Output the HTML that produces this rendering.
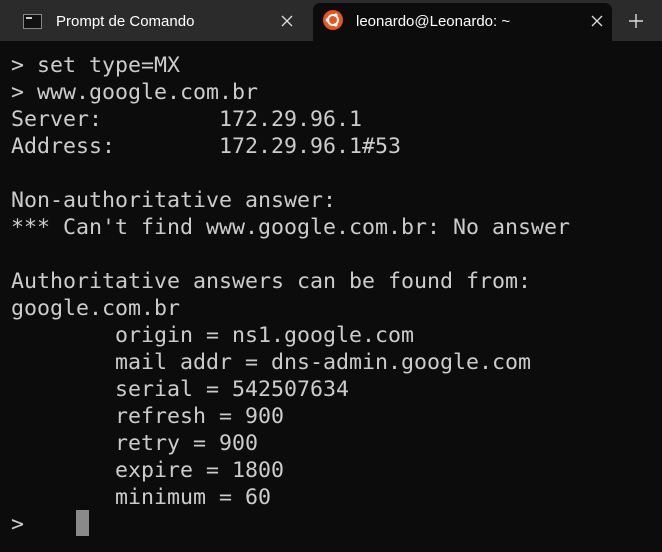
<!DOCTYPE html>
<html><head><style>
body{margin:0;width:662px;height:552px;background:#0c0c0c;overflow:hidden;position:relative;font-family:"Liberation Sans",sans-serif}
.bar{position:absolute;left:0;top:0;width:662px;height:41px;background:#2b2b2b}
.tab{position:absolute;top:0;height:41px;color:#fff;font-size:15px;white-space:nowrap}
.t1{left:0;width:312px}
.t2{left:313px;width:299px;top:3px;height:38px;background:#0c0c0c;border-radius:7px 7px 0 0}
.lbl{position:absolute;top:13px}
.x{position:absolute}
pre{position:absolute;left:11px;top:52px;margin:0;font-family:"DejaVu Sans Mono","Liberation Mono",monospace;font-size:21.6px;line-height:27px;color:#cccccc}
.cur{position:absolute;left:76px;top:510px;width:13px;height:26px;background:#8a8a8a}
</style></head><body>
<div class="bar">
 <div class="tab t1">
  <div style="position:absolute;left:23px;top:14px;width:17px;height:13px;background:#111;border:1px solid #888"><div style="position:absolute;left:2px;top:2px;width:6px;height:2px;background:#ccc"></div></div>
  <span class="lbl" style="left:56px">Prompt de Comando</span>
  <svg class="x" style="left:281px;top:15px" width="12" height="12"><path d="M1 1L11 11M11 1L1 11" stroke="#ddd" stroke-width="1.3"/></svg>
 </div>
 <div class="tab t2">
  <svg style="position:absolute;left:10px;top:7px" width="20" height="20" viewBox="0 0 20 20"><circle cx="10" cy="10" r="10" fill="#e95420"/><circle cx="10" cy="10" r="5" fill="none" stroke="#fff" stroke-width="2"/><circle cx="4.5" cy="10" r="1.8" fill="#fff"/><circle cx="12.8" cy="5.2" r="1.8" fill="#fff"/><circle cx="12.8" cy="14.8" r="1.8" fill="#fff"/></svg>
  <span class="lbl" style="left:43px;top:10px">leonardo@Leonardo: ~</span>
  <svg class="x" style="left:278px;top:12px" width="12" height="12"><path d="M1 1L11 11M11 1L1 11" stroke="#ddd" stroke-width="1.3"/></svg>
 </div>
 <svg style="position:absolute;left:629px;top:14px" width="14" height="14"><path d="M7 0V14M0 7H14" stroke="#ddd" stroke-width="1.4"/></svg>
</div>
<pre>&gt; set type=MX
&gt; www.google.com.br
Server:         172.29.96.1
Address:        172.29.96.1#53

Non-authoritative answer:
*** Can't find www.google.com.br: No answer

Authoritative answers can be found from:
google.com.br
        origin = ns1.google.com
        mail addr = dns-admin.google.com
        serial = 542507634
        refresh = 900
        retry = 900
        expire = 1800
        minimum = 60
&gt;</pre>
<div class="cur"></div>
</body></html>
